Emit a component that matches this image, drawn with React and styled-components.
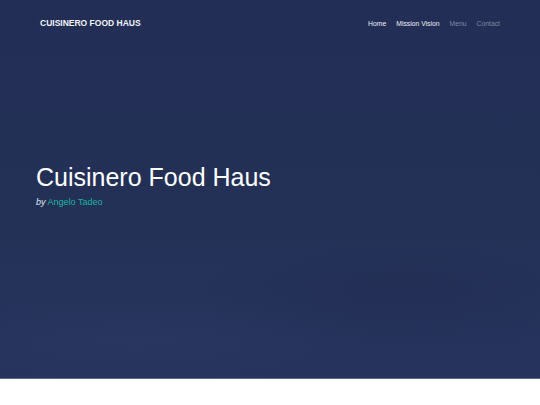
import React from "react"
import styled, { createGlobalStyle } from "styled-components"

const GlobalStyle = createGlobalStyle`
  html, body {
    margin: 0;
    padding: 0;
    background: #ffffff;
    font-family: "Liberation Sans", Arial, sans-serif;
  }
`

const links = [
  { label: "Home", active: true },
  { label: "Mission Vision", active: true },
  { label: "Menu", active: false },
  { label: "Contact", active: false },
]

const App = () => {
  return (
    <>
      <GlobalStyle />
      <Hero>
        <NavBar>
          <Brand>CUISINERO FOOD HAUS</Brand>
          <NavLinks>
            {links.map(link => (
              <NavLink key={link.label} $active={link.active}>
                {link.label}
              </NavLink>
            ))}
          </NavLinks>
        </NavBar>
        <HeroContent>
          <Title>Cuisinero Food Haus</Title>
          <Byline>
            <em>by</em> <Author>Angelo Tadeo</Author>
          </Byline>
        </HeroContent>
      </Hero>
    </>
  )
}

export default App

const Hero = styled.header`
  height: 378px;
  display: flex;
  flex-direction: column;
  border-bottom: 1px solid #5c6b8c;
  /* faint wave shading on the lower half */
  background-image:
    radial-gradient(ellipse 45% 12% at 25% 90%, rgba(56, 68, 112, 0.2), transparent),
    radial-gradient(ellipse 40% 14% at 75% 78%, rgba(24, 32, 64, 0.18), transparent),
    linear-gradient(180deg, #222e55 0%, #243157 60%, #26335d 100%);
`

const NavBar = styled.nav`
  display: flex;
  align-items: center;
  justify-content: space-between;
  padding: 17px 40px 0 40px;
  height: 12px;
`

const Brand = styled.div`
  color: #f2f4f8;
  font-size: 8.5px;
  font-weight: bold;
`

const NavLinks = styled.div`
  display: flex;
  gap: 10px;
`

const NavLink = styled.a`
  color: ${({ $active }) => ($active ? "#eef0f5" : "#7f88a2")};
  font-size: 6.8px;
  cursor: pointer;
`

const HeroContent = styled.div`
  padding: 134px 36px 0 36px;
`

const Title = styled.h1`
  margin: 0;
  color: #ffffff;
  font-size: 25px;
  font-weight: normal;
  line-height: 29px;
`

const Byline = styled.p`
  margin: 5px 0 0 0;
  color: #e6e9f0;
  font-size: 9px;
`

const Author = styled.span`
  color: #1bb5a0;
`
